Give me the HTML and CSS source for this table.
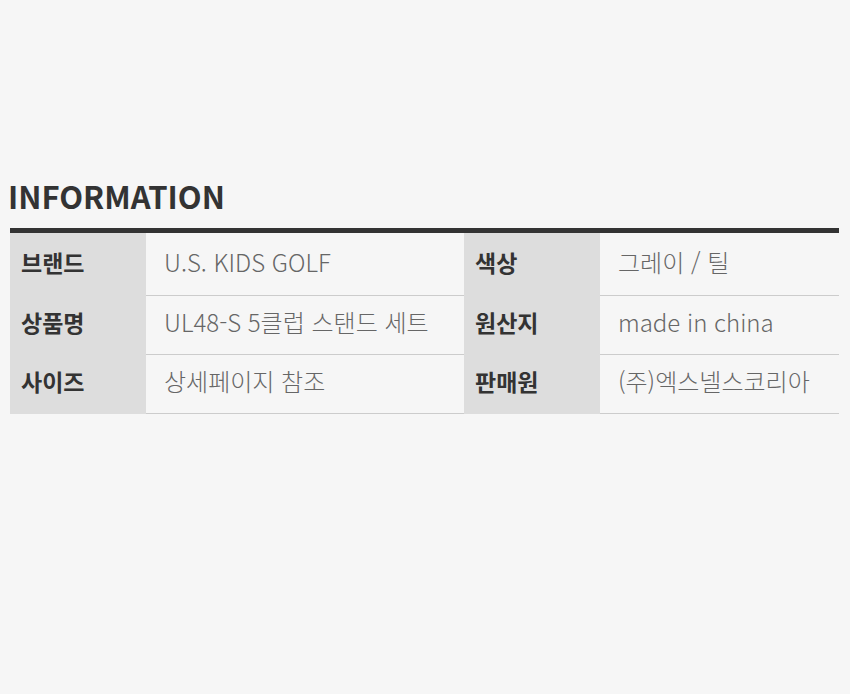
FILE: index.html
```html
<!DOCTYPE html>
<html lang="ko">
<head>
<meta charset="utf-8">
<link rel="stylesheet" href="styles.css">
</head>
<body>
<section class="info">
  <h2 class="info-title">INFORMATION</h2>
  <table class="info-table">
    <colgroup>
      <col class="c-th"><col class="c-td1"><col class="c-th"><col>
    </colgroup>
    <tr class="first">
      <th>브랜드</th><td>U.S. KIDS GOLF</td>
      <th>색상</th><td>그레이 / 틸</td>
    </tr>
    <tr>
      <th>상품명</th><td>UL48-S 5클럽 스탠드 세트</td>
      <th>원산지</th><td>made in china</td>
    </tr>
    <tr>
      <th>사이즈</th><td>상세페이지 참조</td>
      <th>판매원</th><td>(주)엑스넬스코리아</td>
    </tr>
  </table>
</section>
</body>
</html>
```
FILE: styles.css
```css
html, body {
  margin: 0;
  padding: 0;
  background: #f6f6f6;
}
body {
  font-family: "Noto Sans CJK KR", "Noto Sans", sans-serif;
  width: 850px;
  height: 694px;
}
.info {
  padding: 176px 10px 0 10px;
}
.info-title {
  margin: 0 0 0 -2px;
  font-size: 31px;
  font-weight: 700;
  color: #333;
  line-height: 40px;
  letter-spacing: 0;
}
.info-table {
  margin-top: 12px;
  width: 829px;
  border-collapse: collapse;
  table-layout: fixed;
  border-top: 5px solid #333;
}
.c-th { width: 136px; }
.c-td1 { width: 318px; }
.info-table th,
.info-table td {
  height: 52px;
  padding: 0 0 6px 0;
  border-bottom: 1px solid #ccc;
  line-height: 30px;
  text-align: left;
  vertical-align: middle;
  white-space: nowrap;
}
.info-table tr.first th,
.info-table tr.first td {
  height: 58px;
  padding-bottom: 4px;
}
.info-table th {
  background: #dddddd;
  color: #333;
  font-size: 23px;
  font-weight: 700;
  padding-left: 11px;
  border-bottom-color: #ddd;
}
.info-table td {
  color: #666;
  font-size: 24px;
  font-weight: 300;
  padding-left: 18px;
}
```
